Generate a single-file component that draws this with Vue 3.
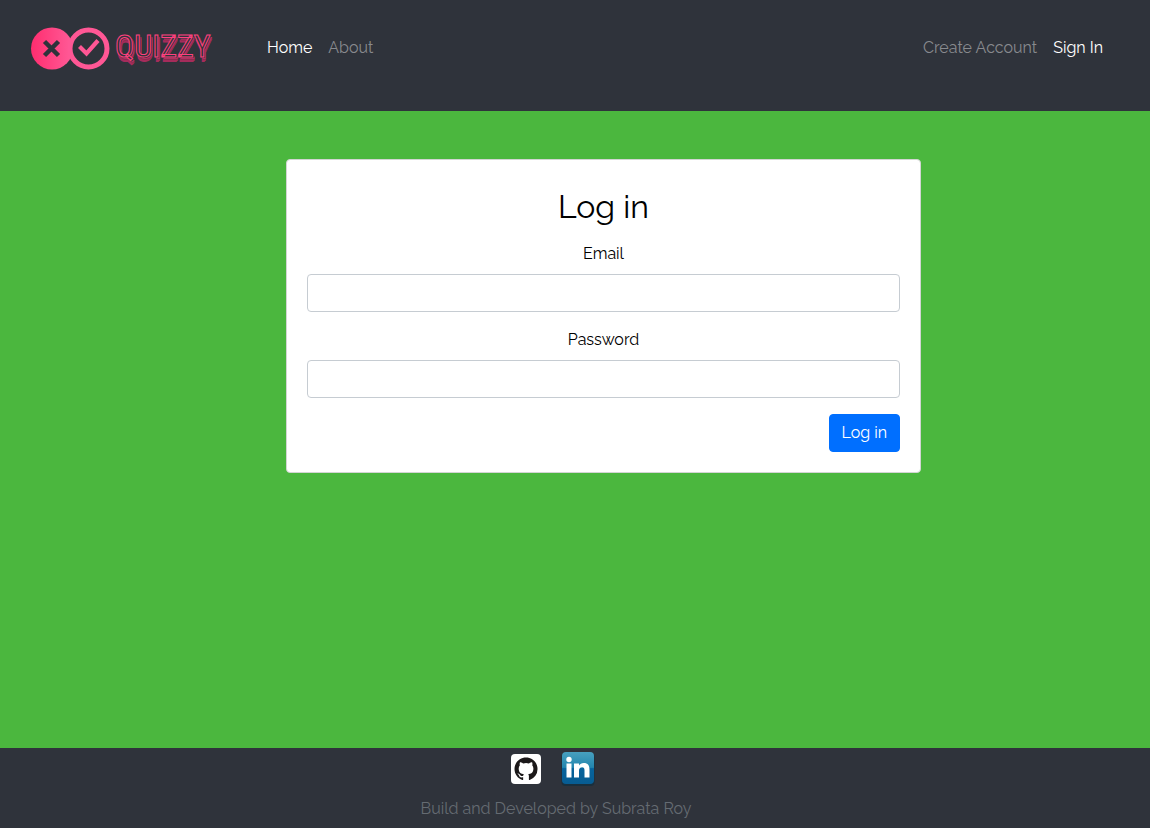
<script setup>
import { ref } from 'vue'

const email = ref('')
const password = ref('')
</script>

<template>
  <div class="page">
    <header class="navbar">
      <a class="brand" href="#" aria-label="Quizzy">
        <svg class="mark" viewBox="0 0 80 44" aria-hidden="true">
          <defs>
            <linearGradient id="pink" x1="0" x2="1">
              <stop offset="0" stop-color="#ff2d6f" />
              <stop offset="1" stop-color="#ff5c98" />
            </linearGradient>
          </defs>
          <circle cx="22" cy="22.500" r="21" fill="url(#pink)" />
          <circle cx="58.500" cy="22.500" r="18.500" fill="#2f333b" stroke="#ff5795" stroke-width="5" />
          <path d="M14.500 15.500L28.500 29.500M28.500 15.500L14.500 29.500" stroke="#2f333b" stroke-width="4.500" />
          <path d="M49.500 20.500L56.500 27.500L68 14.500" fill="none" stroke="#ff5795" stroke-width="4.200" />
        </svg>
        <span class="wordmark">QUIZZY</span>
      </a>
      <nav class="links">
        <a class="active" href="#">Home</a>
        <a href="#">About</a>
      </nav>
      <nav class="links account">
        <a href="#">Create Account</a>
        <a class="active" href="#">Sign In</a>
      </nav>
    </header>

    <main class="content">
      <form class="card" @submit.prevent>
        <h1>Log in</h1>
        <div class="field">
          <label for="email">Email</label>
          <input id="email" v-model="email" type="email" />
        </div>
        <div class="field">
          <label for="password">Password</label>
          <input id="password" v-model="password" type="password" />
        </div>
        <button type="submit">Log in</button>
      </form>
    </main>

    <footer class="footer">
      <div class="social">
        <a href="#" aria-label="GitHub">
          <svg class="github" viewBox="0 0 30 30" aria-hidden="true">
            <rect width="30" height="30" rx="4" fill="#fff" />
            <g transform="translate(3.500 3.500) scale(1.440)">
              <path fill="#1b1819" d="M8 0C3.580 0 0 3.580 0 8c0 3.540 2.290 6.530 5.470 7.590.4.070.55-.17.55-.38 0-.19-.01-.82-.01-1.490-2.010.37-2.530-.49-2.690-.94-.09-.23-.48-.94-.82-1.130-.28-.15-.68-.52-.01-.53.63-.01 1.080.58 1.230.82.72 1.210 1.870.87 2.330.66.070-.52.28-.87.51-1.070-1.780-.2-3.640-.89-3.640-3.950 0-.87.31-1.590.82-2.150-.08-.2-.36-1.020.08-2.120 0 0 .67-.21 2.200.82a7.600 7.600 0 0 1 4 0c1.530-1.040 2.200-.82 2.200-.82.44 1.100.16 1.920.08 2.120.51.56.82 1.270.82 2.150 0 3.070-1.870 3.750-3.650 3.950.29.25.54.73.54 1.480 0 1.070-.01 1.930-.01 2.200 0 .21.15.46.55.38A8.010 8.010 0 0 0 16 8c0-4.420-3.580-8-8-8z" />
            </g>
          </svg>
        </a>
        <a href="#" aria-label="LinkedIn">
          <svg class="linkedin" viewBox="0 0 34 36" aria-hidden="true">
            <defs>
              <linearGradient id="blue" x1="0" y1="0" x2="0" y2="1">
                <stop offset="0" stop-color="#48a0bf" />
                <stop offset="0.480" stop-color="#2386ae" />
                <stop offset="0.520" stop-color="#07639c" />
                <stop offset="1" stop-color="#075c92" />
              </linearGradient>
            </defs>
            <rect x="0.500" y="2" width="33" height="33" rx="4" fill="#192f3d" />
            <rect x="1" y="1" width="32" height="32" rx="4" fill="url(#blue)" />
            <g fill="#fff">
              <circle cx="8" cy="8.500" r="2.700" />
              <rect x="5.500" y="12.500" width="5" height="14" />
              <path d="M13 12.500h5v2c1-1.500 2.500-2.400 4.700-2.400 4.300 0 5.800 2.500 5.800 6.700v7.700h-5v-7c0-2-.4-3.300-2.300-3.300-2.200 0-3.200 1.400-3.200 3.600v6.700h-5z" />
            </g>
          </svg>
        </a>
      </div>
      <p>Build and Developed by Subrata Roy</p>
    </footer>
  </div>
</template>

<style>
body {
  margin: 0;
}
</style>

<style scoped>
.page {
  display: flex;
  flex-direction: column;
  min-height: 100vh;
  background: #4bb73e;
  color: #000;
  font: 16px/24px Raleway, Lato, sans-serif;
}
a {
  text-decoration: none;
}
svg {
  display: block;
}
.navbar {
  display: flex;
  align-items: flex-start;
  box-sizing: border-box;
  min-height: 111px;
  padding: 26px 39px 40px 30px;
  background: #2f333b;
}
.brand {
  display: flex;
  gap: 5px;
  width: 229px;
}
.mark {
  width: 80px;
  height: 44px;
}
.wordmark {
  color: #2f333b;
  font: 32px/40px "Liberation Sans Narrow", "Roboto Condensed", "DejaVu Sans Condensed", sans-serif;
  -webkit-text-stroke: 1px #ff417f;
  text-shadow: 1px 1px 0 #2f333b, 2px 2px 0 #b32f63, 2px 3px 0 #8b2c50, 2px 4px 0 #a52c5b, 1px 5px 0 #a52c5b;
}
.links {
  display: flex;
  gap: 16px;
  padding: 10px 8px;
}
.links a {
  color: #888a8e;
}
.links .active {
  color: #fff;
}
.account {
  margin-left: auto;
}
.content {
  flex: 1;
  padding: 48px 0 48px 57px;
}
.card {
  display: flex;
  flex-direction: column;
  box-sizing: border-box;
  width: 100%;
  max-width: 635px;
  margin: 0 auto;
  padding: 28px 20px 20px;
  border: 1px solid #d3d5d3;
  border-radius: 4px;
  background: #fff;
}
h1 {
  margin: 0 0 16px;
  font-size: 32px;
  font-weight: 400;
  line-height: 38px;
  text-align: center;
}
.field {
  display: flex;
  flex-direction: column;
  gap: 8px;
  margin-bottom: 16px;
  text-align: center;
}
input {
  box-sizing: border-box;
  width: 100%;
  height: 38px;
  padding: 6px 12px;
  border: 1px solid #c6ccd2;
  border-radius: 4px;
  background: #fff;
  font: inherit;
}
button {
  align-self: flex-end;
  padding: 6px 12px;
  border: 1px solid #006fff;
  border-radius: 4px;
  background: #006fff;
  color: #fff;
  font: inherit;
}
.footer {
  display: flex;
  flex-direction: column;
  align-items: center;
  box-sizing: border-box;
  min-height: 80px;
  padding: 3px 38px 7px 0;
  background: #2f333b;
}
.social {
  display: flex;
  align-items: center;
  gap: 20px;
  padding-right: 6px;
}
.github {
  width: 30px;
  height: 30px;
}
.linkedin {
  width: 34px;
  height: 36px;
}
.footer p {
  margin: 10px 0 0;
  color: #656b72;
}
</style>
